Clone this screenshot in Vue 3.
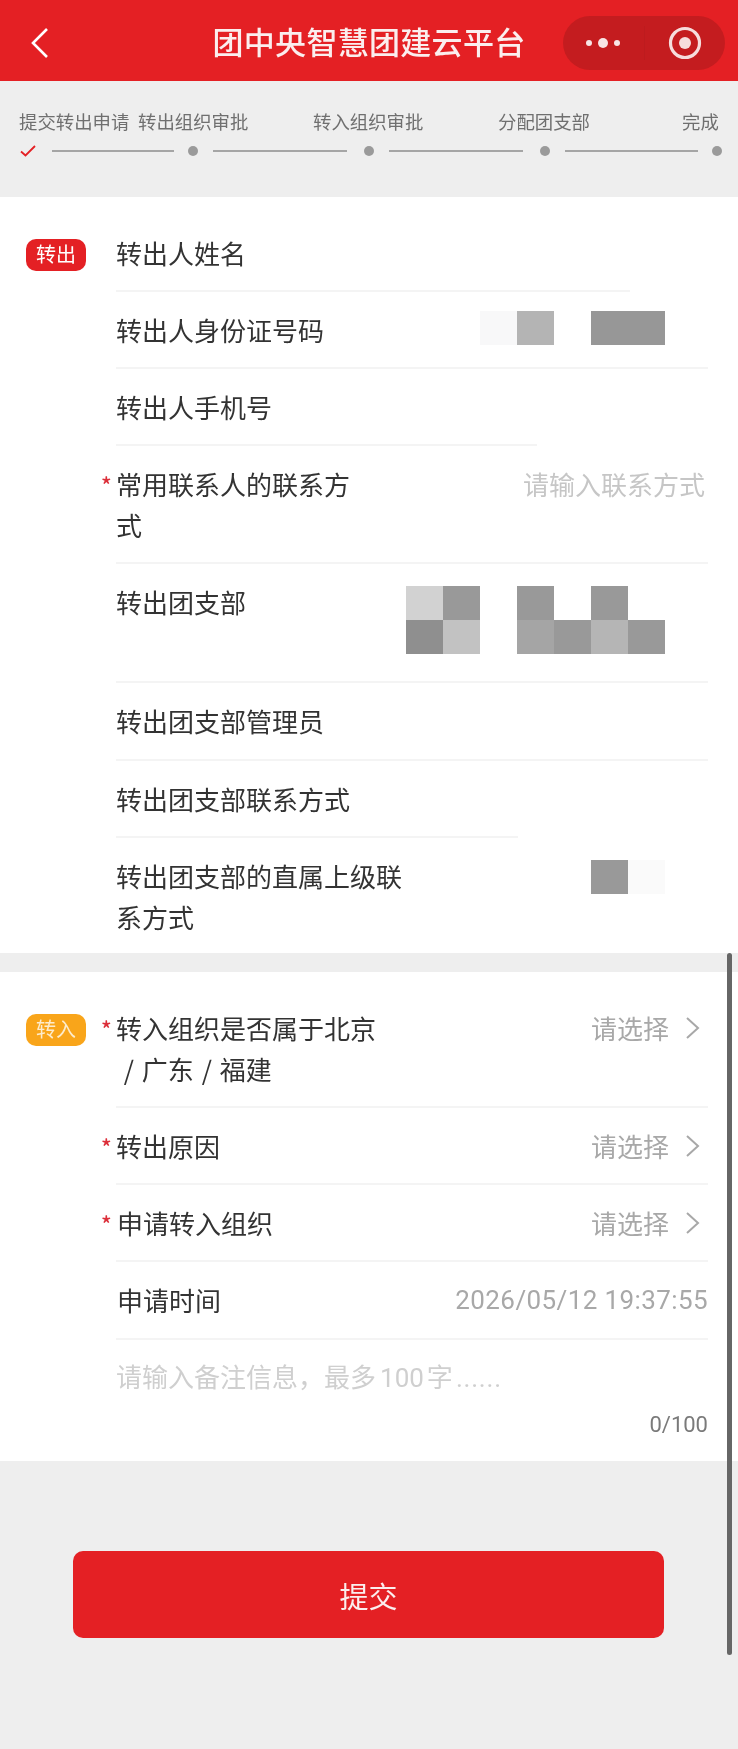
<script setup>
const steps = [
  { label: '提交转出申请', line: 122, gap: 14 },
  { label: '转出组织审批', line: 134, gap: 17 },
  { label: '转入组织审批', line: 134, gap: 17 },
  { label: '分配团支部', line: 133, gap: 14 },
  { label: '完成', line: 0, gap: 0 }
]
const outRows = [
  { lines: ['转出人姓名'], rule: 514 },
  { lines: ['转出人身份证号码'], cells: [['#f8f8f9', '#b4b4b4', '', '#979797', '#979797']], cols: 5 },
  { lines: ['转出人手机号'], rule: 421 },
  { lines: ['常用联系人的联系方', '式'], star: true, hint: '请输入联系方式' },
  { lines: ['转出团支部'], tall: true, cols: 7, cells: [
    ['#d2d2d2', '#999999', '', '#999999', '', '#999999', ''],
    ['#8f8f8f', '#c2c2c2', '', '#a5a5a5', '#999999', '#b5b5b5', '#999999']
  ] },
  { lines: ['转出团支部管理员'] },
  { lines: ['转出团支部联系方式'], rule: 402 },
  { lines: ['转出团支部的直属上级联', '系方式'], last: true, cols: 2, cells: [['#999999', '#fafafa']] }
]
const inRows = [
  { lines: ['转入组织是否属于北京', ' / 广东 / 福建'], star: true, pick: true },
  { lines: ['转出原因'], star: true, pick: true },
  { lines: ['申请转入组织'], star: true, pick: true, inset: true },
  { lines: ['申请时间'], date: '2026/05/12 19:37:55', inset: true }
]
</script>

<template>
  <div class="page">
    <header class="nav">
      <div class="nav-left">
        <svg class="back" width="20" height="32" viewBox="0 0 20 32"><path d="M17 2 3 16l14 14" fill="none" stroke="#fff" stroke-width="2.6"/></svg>
      </div>
      <h1 class="title">团中央智慧团建云平台</h1>
      <div class="nav-right">
        <div class="capsule">
          <div class="more"><i></i><i class="big"></i><i></i></div>
          <span class="capsule-rule"></span>
          <svg width="34" height="34" viewBox="0 0 34 34"><circle cx="17" cy="17" r="14.5" fill="none" stroke="#f6dcdc" stroke-width="3.2"/><circle cx="17" cy="17" r="6" fill="#f6dcdc"/></svg>
        </div>
      </div>
    </header>

    <section class="steps">
      <div class="step-labels">
        <span v-for="s in steps" :key="s.label">{{ s.label }}</span>
      </div>
      <div class="track">
        <svg class="check" width="16" height="12" viewBox="0 0 16 12"><path d="M1 6.5 5.5 10.5 15 1" fill="none" stroke="#e42024" stroke-width="1.8"/></svg>
        <template v-for="(s, i) in steps" :key="i">
          <template v-if="s.line">
            <span class="seg" :style="{ width: s.line + 'px' }"></span>
            <span class="dot" :style="{ marginLeft: s.gap + 'px' }"></span>
          </template>
        </template>
      </div>
    </section>

    <section class="card card-out">
      <span class="tag tag-out">转出</span>
      <div class="rows">
        <div v-for="(r, i) in outRows" :key="i" class="row" :class="{ tall: r.tall, last: r.last }">
          <div class="label">
            <span v-if="r.star" class="star">*</span>
            <span v-for="l in r.lines" :key="l" class="line">{{ l }}</span>
          </div>
          <span v-if="r.hint" class="hint">{{ r.hint }}</span>
          <div v-if="r.cells" class="mosaic" :style="{ gridTemplateColumns: `repeat(${r.cols}, 37px)` }">
            <template v-for="(cells, y) in r.cells" :key="y">
              <span v-for="(c, x) in cells" :key="x" class="cell" :style="{ background: c || 'transparent' }"></span>
            </template>
          </div>
          <span v-if="!r.last" class="rule" :style="r.rule ? { width: r.rule + 'px' } : null"></span>
        </div>
      </div>
    </section>

    <section class="card card-in">
      <span class="tag tag-in">转入</span>
      <div class="rows">
        <div v-for="(r, i) in inRows" :key="i" class="row" :class="{ inset: r.inset }">
          <div class="label">
            <span v-if="r.star" class="star">*</span>
            <span v-for="l in r.lines" :key="l" class="line">{{ l }}</span>
          </div>
          <div v-if="r.pick" class="pick">
            <span>请选择</span>
            <svg width="16" height="24" viewBox="0 0 16 24"><path d="M2 2l11 10L2 22" fill="none" stroke="#a8a8a8" stroke-width="2"/></svg>
          </div>
          <span v-if="r.date" class="date">{{ r.date }}</span>
          <span class="rule"></span>
        </div>
        <div class="remark">
          <div class="placeholder">请输入备注信息，最多<span class="num">100</span>字<span class="ellipsis">......</span></div>
          <div class="count">0/100</div>
        </div>
      </div>
    </section>

    <div class="actions">
      <button class="submit" type="button">提交</button>
    </div>

    <span class="scrollbar"></span>
  </div>
</template>

<style>
html, body { margin: 0; background: #eeeeee; }
</style>

<style scoped>
.page {
  position: relative;
  width: 738px;
  height: 1749px;
  overflow: hidden;
  background: #eeeeee;
  font-family: "Noto Sans CJK SC", "Noto Sans", sans-serif;
  color: #333333;
  filter: blur(0.45px);
}
.nav {
  display: grid;
  grid-template-columns: 1fr auto 1fr;
  align-items: center;
  height: 81px;
  background: #e42024;
}
.nav-left { padding-left: 30px; display: flex; align-items: center; }
.back { margin-top: 4px; }
.title {
  margin: 0;
  font-size: 31px;
  line-height: 42px;
  letter-spacing: 0.3px;
  font-weight: 500;
  color: #fbeeee;
}
.nav-right { display: flex; justify-content: flex-end; padding-right: 13px; }
.capsule {
  display: flex;
  align-items: center;
  width: 162px;
  height: 54px;
  margin-top: 4px;
  box-sizing: border-box;
  padding: 0 22px 0 23px;
  border-radius: 27px;
  background: #c41c1f;
}
.more { display: flex; align-items: center; gap: 6px; }
.more i { width: 6px; height: 6px; border-radius: 50%; background: #f8e4e4; }
.more i.big { width: 10px; height: 10px; }
.capsule-rule { width: 1px; height: 34px; margin: 0 23px 0 24px; background: #bd1b1e; }

.steps { height: 116px; box-sizing: border-box; padding-top: 27px; }
.step-labels {
  display: grid;
  grid-template-columns: 119px 175px 185px 184px auto;
  padding-left: 19px;
  font-size: 18.4px;
  line-height: 26px;
  color: #6f6f6f;
  white-space: nowrap;
}
.track { display: flex; align-items: center; height: 12px; margin-top: 11px; padding-left: 20px; }
.seg { height: 2px; margin-left: 14px; background: #a5a5a5; }
.check { margin-right: 2px; }
.dot { width: 10px; height: 10px; margin-right: 1px; border-radius: 50%; background: #9a9a9a; }

.card {
  display: flex;
  align-items: flex-start;
  padding: 18px 30px 0 26px;
  background: #ffffff;
}
.card-out { height: 756px; box-sizing: border-box; }
.card-in { margin-top: 19px; height: 489px; box-sizing: border-box; }
.tag {
  flex: none;
  width: 60px;
  height: 32px;
  margin-top: 24px;
  border-radius: 10px;
  color: #fff;
  font-size: 20px;
  line-height: 30px;
  text-align: center;
}
.tag-out { background: #e42024; }
.tag-in { background: #f9a51a; color: #fdeccd; }
.rows { flex: 1; min-width: 0; margin-left: 30px; }
.row {
  position: relative;
  display: flex;
  justify-content: space-between;
  align-items: flex-start;
  padding: 17px 0 19px;
}
.row.tall { height: 83px; }
.row.last { padding-bottom: 16px; }
.card-out .row:nth-child(6) { padding-bottom: 20px; }
.rule {
  position: absolute;
  left: 0;
  bottom: 0;
  width: 100%;
  height: 2px;
  background: #f4f4f4;
}
.label { position: relative; font-size: 26px; line-height: 41px; word-spacing: 2px; color: #333333; white-space: pre; }
.row.inset .label { padding-left: 1px; }
.line { display: block; }
.star {
  position: absolute;
  left: -15px;
  top: 4px;
  font-size: 22px;
  font-weight: 500;
  line-height: 34px;
  color: #dc2f3a;
}
.hint { font-size: 26px; line-height: 41px; color: #c6c6c6; margin-right: 3px; }
.mosaic { display: grid; grid-auto-rows: 34px; margin-right: 43px; }
.row.tall .mosaic { margin-top: 5px; }
.row.last .mosaic { margin-top: 5px; }
.row:nth-child(2) .mosaic { margin-top: 2px; }
.pick { display: flex; align-items: center; height: 41px; font-size: 26px; color: #a8a8a8; gap: 16px; padding-right: 7px; }
.date {
  margin-top: 1px;
  font-family: Roboto, sans-serif;
  font-size: 26px;
  line-height: 41px;
  letter-spacing: 0.4px;
  color: #a8a8a8;
}
.remark { height: 122px; box-sizing: border-box; padding-top: 18px; }
.placeholder { font-family: Roboto, "Noto Sans CJK SC", sans-serif; font-size: 26px; line-height: 41px; color: #cfcfcf; }
.num { margin: 0 3px 0 4px; }
.ellipsis { margin-left: 3px; letter-spacing: 0.8px; }
.count {
  margin-top: 11px;
  font-family: Roboto, sans-serif;
  font-size: 22px;
  line-height: 30px;
  text-align: right;
  color: #7a7a7a;
}
.actions { padding: 90px 74px 0 73px; }
.submit {
  display: block;
  width: 100%;
  height: 87px;
  padding: 0;
  border: 0;
  border-radius: 10px;
  background: #e42024;
  color: #fbeeee;
  font-family: inherit;
  font-size: 29px;
}
.scrollbar {
  position: absolute;
  left: 727px;
  top: 953px;
  width: 5px;
  height: 702px;
  border-radius: 3px;
  background: #666666;
}
</style>
